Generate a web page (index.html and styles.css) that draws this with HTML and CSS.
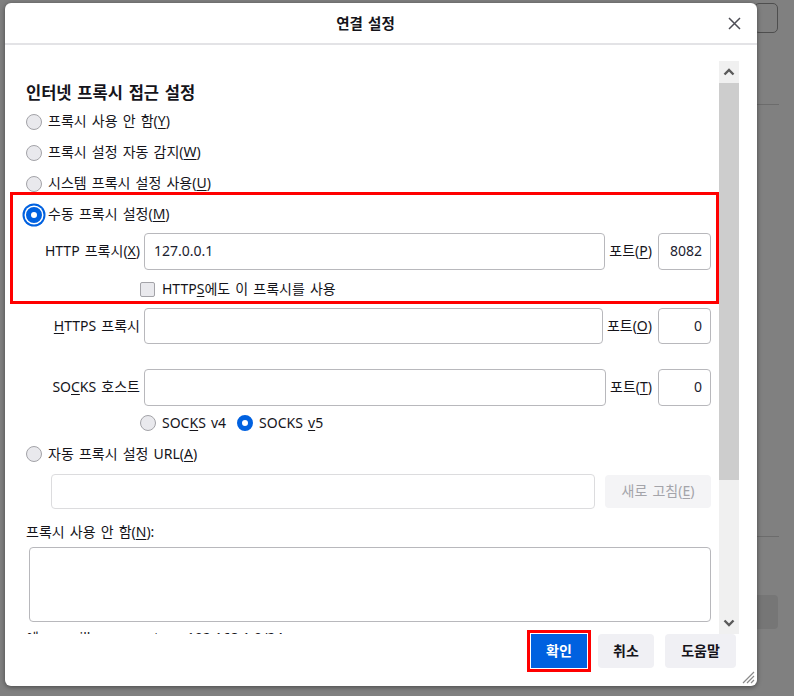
FILE: index.html
```html
<!DOCTYPE html>
<html lang="ko">
<head>
    <meta charset="UTF-8">
    <title>연결 설정</title>
    <link rel="stylesheet" href="styles.css">
</head>
<body>

<!-- dimmed preferences page behind the dialog -->
<div class="page">
    <div class="page-side">
        <div class="side-box"></div>
        <div class="side-rule"></div>
        <div class="side-rule low"></div>
        <div class="side-btn"></div>
    </div>
</div>

<div class="dialog">
    <div class="dlg-head">
        <span class="dlg-title">연결 설정</span>
        <span class="dlg-close">
            <svg width="13" height="13" viewBox="0 0 13 13"><path d="M1 1 L12 12 M12 1 L1 12" stroke="#4d4d55" stroke-width="1.5" fill="none"/></svg>
        </span>
    </div>

    <div class="dlg-body">
        <div class="scroll">
            <h2>인터넷 프록시 접근 설정</h2>
            <div class="opt"><span class="radio"></span><span>프록시 사용 안 함(<u>Y</u>)</span></div>
            <div class="opt"><span class="radio"></span><span>프록시 설정 자동 감지(<u>W</u>)</span></div>
            <div class="opt"><span class="radio"></span><span>시스템 프록시 설정 사용(<u>U</u>)</span></div>

            <div class="manual">
                <div class="opt"><span class="radio on focus"></span><span>수동 프록시 설정(<u>M</u>)</span></div>
                <div class="field first">
                    <span class="flabel">HTTP 프록시(<u>X</u>)</span>
                    <span class="input">127.0.0.1</span>
                    <span class="plabel">포트(<u>P</u>)</span>
                    <span class="input port">8082</span>
                </div>
                <div class="check-row"><span class="check"></span><span>HTTP<u>S</u>에도 이 프록시를 사용</span></div>
            </div>

            <div class="field https">
                <span class="flabel"><u>H</u>TTPS 프록시</span>
                <span class="input"></span>
                <span class="plabel">포트(<u>O</u>)</span>
                <span class="input port">0</span>
            </div>
            <div class="field socks">
                <span class="flabel">SO<u>C</u>KS 호스트</span>
                <span class="input"></span>
                <span class="plabel">포트(<u>T</u>)</span>
                <span class="input port">0</span>
            </div>
            <div class="socks-ver">
                <span class="radio"></span><span>SOC<u>K</u>S v4</span>
                <span class="radio on v5"></span><span>SOCKS <u>v</u>5</span>
            </div>

            <div class="opt auto"><span class="radio"></span><span>자동 프록시 설정 URL(<u>A</u>)</span></div>
            <div class="url-row">
                <span class="input off"></span>
                <span class="btn-off">새로 고침(<u>E</u>)</span>
            </div>

            <div class="np-label">프록시 사용 안 함(<u>N</u>):</div>
            <div class="textarea"></div>
            <div class="hint">예: .mozilla.org, .net.nz, 192.168.1.0/24</div>
        </div>

        <div class="scrollbar">
            <div class="sb-arrow">
                <svg width="12" height="8" viewBox="0 0 12 8"><path d="M1.5 6.5 L6 2 L10.5 6.5" stroke="#5a5a5a" stroke-width="2.4" fill="none"/></svg>
            </div>
            <div class="sb-thumb"></div>
            <div class="sb-track"></div>
            <div class="sb-arrow">
                <svg width="12" height="8" viewBox="0 0 12 8"><path d="M1.5 1.5 L6 6 L10.5 1.5" stroke="#5a5a5a" stroke-width="2.4" fill="none"/></svg>
            </div>
        </div>
    </div>

    <div class="dlg-foot">
        <span class="btn primary">확인</span>
        <span class="btn">취소</span>
        <span class="btn wide">도움말</span>
    </div>

    <svg class="grip" width="15" height="15" viewBox="0 0 15 15"><path d="M14 3 L3 14 M14 7 L7 14 M14 11 L11 14" stroke="#8a8a8a" stroke-width="1.2" fill="none"/></svg>
</div>

</body>
</html>
```

FILE: styles.css
```css
body {
  margin: 0;
  width: 794px;
  height: 696px;
  overflow: hidden;
  background: #808080;
  font-family: "Noto Sans", "Noto Sans CJK KR", sans-serif;
  font-size: 14px;
  line-height: 1.3;
  color: #15141a;
  word-spacing: 1.5px;
}
u {
  text-underline-offset: 2px;
}

/* page behind */
.page {
  height: 696px;
  display: flex;
  justify-content: flex-end;
}
.page-side {
  width: 40px;
  padding-top: 3px;
}
.side-box {
  height: 28px;
  margin-right: 16px;
  border: 1.5px solid #4e4e4e;
  border-radius: 5px;
}
.side-rule {
  height: 1px;
  margin: 71px 15px 0 0;
  background: #6c6c6c;
}
.side-rule.low {
  margin-top: 431px;
}
.side-btn {
  height: 34px;
  margin: 58px 16px 0 0;
  background: #767676;
  border-radius: 4px;
}

/* dialog */
.dialog {
  position: absolute;
  left: 5px;
  top: 3px;
  width: 752px;
  height: 683px;
  background: #fff;
  border-radius: 6px;
  box-shadow: 0 1px 5px rgba(0, 0, 0, 0.45);
  display: flex;
  flex-direction: column;
  overflow: hidden;
}
.dlg-head {
  height: 40px;
  border-bottom: 2px solid #e3e3e6;
  display: flex;
  align-items: center;
}
.dlg-title {
  flex: 1;
  text-align: center;
  font-size: 14.5px;
  font-weight: 700;
}
.dlg-close {
  width: 16px;
  margin-right: 15px;
  display: flex;
  justify-content: center;
}

.dlg-body {
  display: flex;
  padding-top: 16px;
  height: 573px;
}
.scroll {
  flex: 1;
  height: 573px;
  overflow: hidden;
  padding: 19px 8px 0 21px;
  box-sizing: border-box;
}
h2 {
  margin: 0;
  height: 26px;
  line-height: 26px;
  font-size: 16.5px;
  font-weight: 700;
}
.opt {
  height: 31px;
  display: flex;
  align-items: center;
  gap: 6px;
}
.radio {
  width: 14px;
  height: 14px;
  border: 1px solid #a3a3a8;
  border-radius: 50%;
  background: #e9e9ed;
  flex: none;
}
.radio.on {
  width: 6px;
  height: 6px;
  border: 5px solid #0061e0;
  background: #fff;
}
.radio.focus {
  box-shadow: 0 0 0 1.5px #fff, 0 0 0 3.5px #0061e0;
}

.manual {
  margin: -4px -5px 0 -13px;
  padding: 4px 5px 0 13px;
  outline: 3px solid #f00;
}
.field {
  height: 37px;
  display: flex;
  align-items: center;
}
.field.first {
  margin-top: 3px;
}
.field.https {
  margin-top: 7px;
  height: 36px;
}
.field.socks {
  margin-top: 25px;
}
.flabel {
  width: 114px;
  margin-right: 4px;
  text-align: right;
  white-space: nowrap;
}
.plabel {
  margin: 0 6px 0 4px;
  white-space: nowrap;
}
.input {
  flex: 1;
  height: 100%;
  box-sizing: border-box;
  border: 1px solid #b8b8bc;
  border-radius: 4px;
  padding-left: 9px;
  display: flex;
  align-items: center;
  color: #1c2230;
}
.input.port {
  flex: none;
  width: 53px;
  justify-content: flex-end;
  padding: 0 8px 0 0;
}
.input.off {
  border-color: #dcdcde;
}
.check-row {
  height: 31px;
  box-sizing: border-box;
  padding: 7px 0 0 114px;
  display: flex;
  align-items: center;
  gap: 7px;
}
.check {
  width: 13px;
  height: 13px;
  border: 1px solid #a3a3a8;
  border-radius: 2px;
  background: #e9e9ed;
}

.socks-ver {
  height: 34px;
  padding-left: 114px;
  display: flex;
  align-items: center;
  gap: 6px;
}
.radio.v5 {
  margin-left: 5px;
}
.opt.auto {
  height: 28px;
}
.url-row {
  margin-top: 6px;
  height: 35px;
  padding-left: 25px;
  display: flex;
  align-items: center;
  gap: 10px;
}
.btn-off {
  width: 106px;
  height: 33px;
  border-radius: 4px;
  background: #f4f4f6;
  color: #a4a4aa;
  display: flex;
  align-items: center;
  justify-content: center;
}
.np-label {
  margin-top: 11px;
  height: 24px;
  line-height: 24px;
}
.textarea {
  margin: 3px 0 0 3px;
  height: 75px;
  box-sizing: border-box;
  border: 1px solid #b8b8bc;
  border-radius: 4px;
}
.hint {
  margin-top: 7px;
  white-space: nowrap;
}

/* scrollbar */
.scrollbar {
  width: 20px;
  margin-right: 18px;
  background: #f0f0f0;
  display: flex;
  flex-direction: column;
}
.sb-arrow {
  height: 22px;
  display: flex;
  align-items: center;
  justify-content: center;
}
.sb-thumb {
  height: 397px;
  background: #cdcdcd;
}
.sb-track {
  flex: 1;
}

/* footer */
.dlg-foot {
  display: flex;
  justify-content: flex-end;
  gap: 11px;
  padding-right: 21px;
}
.btn {
  width: 56px;
  height: 34px;
  border-radius: 4px;
  background: #f0f0f4;
  font-weight: 700;
  display: flex;
  align-items: center;
  justify-content: center;
}
.btn.wide {
  width: 71px;
}
.btn.primary {
  background: #0061e0;
  color: #fff;
  border-radius: 0;
  outline: 3px solid #f00;
  outline-offset: 1px;
}
.grip {
  position: absolute;
  right: 2px;
  bottom: 2px;
}
```
